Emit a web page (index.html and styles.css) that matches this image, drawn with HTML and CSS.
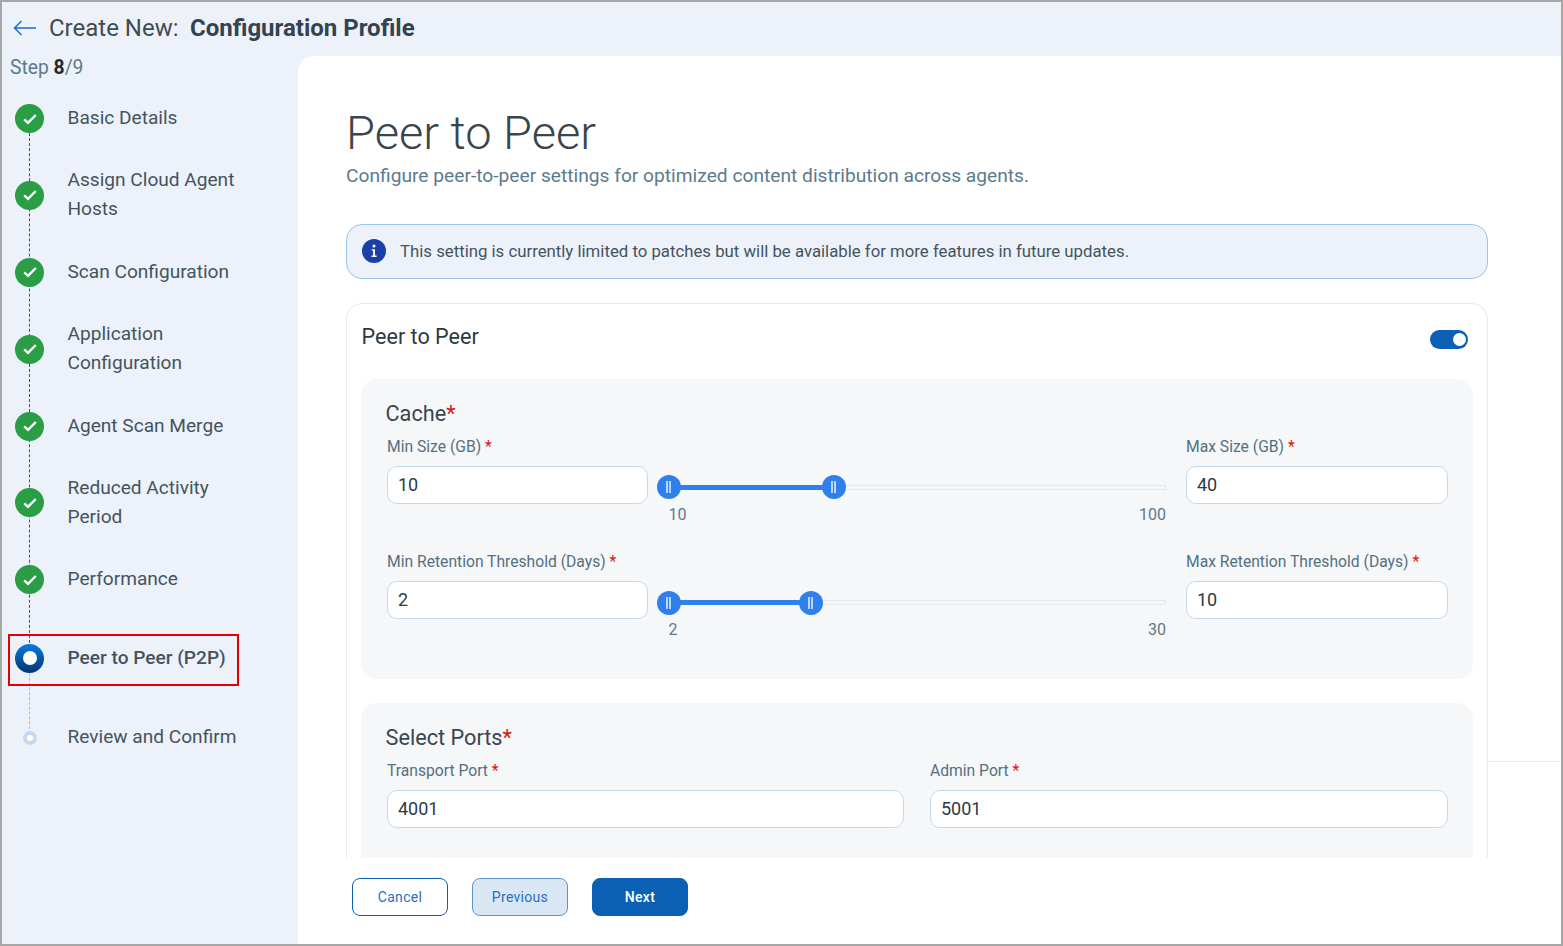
FILE: index.html
```html
<!DOCTYPE html>
<html lang="en">
<head>
    <meta charset="UTF-8">
    <meta name="viewport" content="width=device-width, initial-scale=1.0">
    <title>Create New: Configuration Profile</title>
    <link rel="stylesheet" href="styles.css">
</head>
<body>
    <div class="frame">
        <header class="top-bar">
            <svg class="back-arrow" width="24" height="16" viewBox="0 0 24 16" fill="none" stroke="#1a6fc4" stroke-width="1.5">
                <path d="M23 8H1.5M8.5 1 1.5 8l7 7"/>
            </svg>
            <span class="top-title">Create New:</span>
            <strong class="top-name">Configuration Profile</strong>
        </header>

        <div class="layout">
            <aside class="sidebar">
                <div class="step-count">Step <b>8</b>/9</div>
                <div class="steps">
                    <div class="line line-done"></div>
                    <div class="line line-todo"></div>

                    <div class="step">
                        <span class="dot dot-done"><svg width="18" height="18" viewBox="0 0 18 18" fill="none" stroke="#fff" stroke-width="2.4"><path d="M3.2 9.4 7 12.8 14.8 5"/></svg></span>
                        <span class="step-text">Basic Details</span>
                    </div>
                    <div class="step">
                        <span class="dot dot-done"><svg width="18" height="18" viewBox="0 0 18 18" fill="none" stroke="#fff" stroke-width="2.4"><path d="M3.2 9.4 7 12.8 14.8 5"/></svg></span>
                        <span class="step-text">Assign Cloud Agent Hosts</span>
                    </div>
                    <div class="step">
                        <span class="dot dot-done"><svg width="18" height="18" viewBox="0 0 18 18" fill="none" stroke="#fff" stroke-width="2.4"><path d="M3.2 9.4 7 12.8 14.8 5"/></svg></span>
                        <span class="step-text">Scan Configuration</span>
                    </div>
                    <div class="step">
                        <span class="dot dot-done"><svg width="18" height="18" viewBox="0 0 18 18" fill="none" stroke="#fff" stroke-width="2.4"><path d="M3.2 9.4 7 12.8 14.8 5"/></svg></span>
                        <span class="step-text">Application Configuration</span>
                    </div>
                    <div class="step">
                        <span class="dot dot-done"><svg width="18" height="18" viewBox="0 0 18 18" fill="none" stroke="#fff" stroke-width="2.4"><path d="M3.2 9.4 7 12.8 14.8 5"/></svg></span>
                        <span class="step-text">Agent Scan Merge</span>
                    </div>
                    <div class="step">
                        <span class="dot dot-done"><svg width="18" height="18" viewBox="0 0 18 18" fill="none" stroke="#fff" stroke-width="2.4"><path d="M3.2 9.4 7 12.8 14.8 5"/></svg></span>
                        <span class="step-text">Reduced Activity Period</span>
                    </div>
                    <div class="step">
                        <span class="dot dot-done"><svg width="18" height="18" viewBox="0 0 18 18" fill="none" stroke="#fff" stroke-width="2.4"><path d="M3.2 9.4 7 12.8 14.8 5"/></svg></span>
                        <span class="step-text">Performance</span>
                    </div>
                    <div class="step step-active">
                        <span class="dot dot-active"></span>
                        <span class="step-text">Peer to Peer (P2P)</span>
                    </div>
                    <div class="step step-last">
                        <span class="dot-slot"><span class="dot dot-todo"></span></span>
                        <span class="step-text">Review and Confirm</span>
                    </div>
                </div>
            </aside>

            <main class="main">
                <div class="side-rule"></div>
                <div class="content">
                    <h1 class="page-title">Peer to Peer</h1>
                    <p class="page-sub">Configure peer-to-peer settings for optimized content distribution across agents.</p>

                    <div class="info-box">
                        <svg class="info-icon" width="24" height="24" viewBox="0 0 24 24">
                            <circle cx="12" cy="12" r="12" fill="#1a3fa8"/>
                            <circle cx="12" cy="7" r="1.5" fill="#fff"/>
                            <path d="M9.6 10.2H13V16.6H14.6V18H9.6V16.6H11.1V11.6H9.6Z" fill="#fff"/>
                        </svg>
                        <span>This setting is currently limited to patches but will be available for more features in future updates.</span>
                    </div>

                    <section class="card">
                        <div class="card-head">
                            <h2 class="card-title">Peer to Peer</h2>
                            <span class="toggle"><span class="toggle-knob"></span></span>
                        </div>

                        <div class="panel panel-cache">
                            <h3 class="panel-title">Cache<span class="req">*</span></h3>
                            <div class="range-row">
                                <div class="field">
                                    <label class="field-label">Min Size (GB) <span class="req">*</span></label>
                                    <div class="input">10</div>
                                </div>
                                <div class="slider">
                                    <div class="track">
                                        <div class="fill" style="width: 165px"></div>
                                        <span class="thumb thumb-min"></span>
                                        <span class="thumb" style="left: 165px"></span>
                                    </div>
                                    <div class="scale"><span>10</span><span>100</span></div>
                                </div>
                                <div class="field">
                                    <label class="field-label">Max Size (GB) <span class="req">*</span></label>
                                    <div class="input">40</div>
                                </div>
                            </div>
                            <div class="range-row">
                                <div class="field">
                                    <label class="field-label">Min Retention Threshold (Days) <span class="req">*</span></label>
                                    <div class="input">2</div>
                                </div>
                                <div class="slider">
                                    <div class="track">
                                        <div class="fill" style="width: 142px"></div>
                                        <span class="thumb thumb-min"></span>
                                        <span class="thumb" style="left: 142px"></span>
                                    </div>
                                    <div class="scale"><span>2</span><span>30</span></div>
                                </div>
                                <div class="field">
                                    <label class="field-label">Max Retention Threshold (Days) <span class="req">*</span></label>
                                    <div class="input">10</div>
                                </div>
                            </div>
                        </div>

                        <div class="panel panel-ports">
                            <h3 class="panel-title">Select Ports<span class="req">*</span></h3>
                            <div class="ports-row">
                                <div class="field">
                                    <label class="field-label">Transport Port <span class="req">*</span></label>
                                    <div class="input">4001</div>
                                </div>
                                <div class="field">
                                    <label class="field-label">Admin Port <span class="req">*</span></label>
                                    <div class="input">5001</div>
                                </div>
                            </div>
                        </div>
                    </section>
                </div>

                <footer class="footer">
                    <button class="btn btn-cancel">Cancel</button>
                    <button class="btn btn-prev">Previous</button>
                    <button class="btn btn-next">Next</button>
                </footer>
            </main>
        </div>
    </div>
</body>
</html>
```

FILE: styles.css
```css
* {
    box-sizing: border-box;
}
body {
    margin: 0;
    font-family: 'Roboto', sans-serif;
    background-color: #fff;
}
h1, h2, h3, p {
    margin: 0;
    font-weight: 400;
}
.frame {
    width: 1563px;
    height: 946px;
    border: 2px solid #a6a6a6;
    background-color: #edf2fa;
    display: flex;
    flex-direction: column;
    overflow: hidden;
}

/* top bar */
.top-bar {
    height: 54px;
    flex-shrink: 0;
    display: flex;
    align-items: center;
    padding: 0 0 2px 11px;
}
.back-arrow {
    margin-right: 12px;
}
.top-title {
    font-size: 24px;
    color: #414b52;
    margin-right: 11.5px;
}
.top-name {
    font-size: 24px;
    font-weight: 700;
    color: #33434f;
}

.layout {
    flex: 1;
    display: flex;
    min-height: 0;
}

/* left stepper */
.sidebar {
    width: 296px;
    flex-shrink: 0;
}
.step-count {
    font-size: 19.3px;
    line-height: 24px;
    color: #5c7a8c;
    padding-left: 8px;
    margin-bottom: 23px;
}
.step-count b {
    color: #1f2a33;
    font-weight: 700;
}
.steps {
    position: relative;
    padding-left: 13px;
}
.line {
    position: absolute;
    left: 27px;
    width: 0;
    border-left: 1px dashed #0b5fb5;
}
.line-done {
    top: 20px;
    height: 530px;
}
.line-todo {
    top: 570px;
    height: 56px;
    border-left-color: #9dbfe0;
}
.step {
    position: relative;
    display: flex;
    align-items: center;
    gap: 23.5px;
    margin-bottom: 33.4px;
    font-size: 19.1px;
    line-height: 29px;
    color: #44545f;
}
.step-text {
    width: 190px;
}
.dot {
    width: 29px;
    height: 29px;
    margin: 1px 0 -1px;
    flex-shrink: 0;
    border-radius: 50%;
    display: flex;
    align-items: center;
    justify-content: center;
}
.dot-done {
    background-color: #2a9d45;
}
.dot-active {
    margin: 1px 0 -1px;
    background: linear-gradient(#0a7ae2, #04356f);
}
.dot-active::after {
    content: "";
    width: 14px;
    height: 14px;
    border-radius: 50%;
    background-color: #fff;
}
.dot-slot {
    width: 29px;
    flex-shrink: 0;
    display: flex;
    justify-content: center;
    padding-top: 3px;
}
.dot-todo {
    width: 14px;
    height: 14px;
    margin: 0;
    border: 4px solid #c5daf0;
    background-color: #fff;
}
.step-active {
    font-weight: 500;
    width: 231px;
    height: 52px;
    margin: 40.6px 0 36px -7px;
    padding: 0 0 5px 5px;
    border: 2px solid #e30000;
}
.step-active .step-text {
    white-space: nowrap;
}

/* main panel */
.main {
    position: relative;
    flex: 1;
    min-width: 0;
    display: flex;
    flex-direction: column;
    background-color: #fff;
    border-top-left-radius: 16px;
}
.side-rule {
    position: absolute;
    top: 705px;
    right: 0;
    width: 73px;
    height: 1px;
    background-color: #e8eaed;
}
.content {
    flex: 1;
    min-height: 0;
    overflow: hidden;
    padding: 49px 73px 0 48px;
}
.page-title {
    font-size: 47px;
    line-height: 56px;
    font-weight: 300;
    color: #3a464e;
}
.page-sub {
    margin-top: 1px;
    font-size: 19.2px;
    line-height: 28px;
    color: #5c7a8c;
}
.info-box {
    margin-top: 34px;
    height: 55px;
    display: flex;
    align-items: center;
    gap: 14px;
    padding: 0 0 2px 15px;
    background-color: #edf2fa;
    border: 1px solid #9cc4e8;
    border-radius: 16px;
    font-size: 16.77px;
    color: #44545f;
}
.info-icon {
    flex-shrink: 0;
}
.card {
    margin-top: 24px;
    padding: 0 14px 40px;
    border: 1px solid #e8eaed;
    border-radius: 16px;
}
.card-head {
    height: 75px;
    display: flex;
    justify-content: space-between;
    padding: 19px 5px 0 0.5px;
}
.card-title {
    font-size: 21.6px;
    line-height: 28px;
    color: #2e3a42;
}
.toggle {
    width: 38px;
    height: 19px;
    margin-top: 7px;
    border-radius: 10px;
    background-color: #0b5fb5;
    display: flex;
    align-items: center;
    justify-content: flex-end;
    padding-right: 2px;
}
.toggle-knob {
    width: 13px;
    height: 13px;
    border-radius: 50%;
    background-color: #fff;
}

/* gray panels */
.panel {
    background-color: #f6f7f9;
    border-radius: 16px;
    padding: 21px 25px 41px 26px;
}
.panel-ports {
    margin-top: 24px;
}
.panel-title {
    font-size: 21.7px;
    line-height: 28px;
    color: #3a464e;
    margin-left: -1.5px;
    margin-bottom: 9px;
}
.req {
    color: #e01010;
}
.range-row {
    display: grid;
    grid-template-columns: 261px 509px 262px;
    column-gap: 9px;
    margin-bottom: 29px;
}
.range-row:last-child {
    margin-bottom: 0;
}
.range-row .field:last-child {
    margin-left: 11px;
    width: 262px;
}
.ports-row {
    display: grid;
    grid-template-columns: 517px 518px;
    column-gap: 26px;
}
.field-label {
    display: block;
    font-size: 15.66px;
    line-height: 20px;
    color: #54707f;
    white-space: nowrap;
    margin-bottom: 9px;
}
.input {
    height: 38px;
    padding-left: 10px;
    background-color: #fff;
    border: 1px solid #c5d9ee;
    border-radius: 10px;
    font-size: 18px;
    line-height: 36px;
    color: #2e3a42;
}

/* range slider */
.slider {
    padding-top: 38px;
}
.range-row:last-child .slider {
    padding-top: 39px;
}
.track {
    position: relative;
    height: 24px;
    margin-left: 12px;
}
.track::before {
    content: "";
    position: absolute;
    left: 0;
    right: 0;
    top: 10px;
    height: 3px;
    background-color: #f6f7f9;
    border: 1px solid #e4e8ee;
}
.fill {
    position: absolute;
    left: 0;
    top: 10px;
    height: 5px;
    background-color: #2f80ed;
}
.range-row:last-child .fill,
.range-row:last-child .track::before {
    top: 9px;
}
.thumb {
    position: absolute;
    top: 0;
    width: 24px;
    height: 24px;
    margin-left: -12px;
    border-radius: 50%;
    background-color: #2f80ed;
}
.thumb-min {
    left: 0;
}
.thumb::after {
    content: "";
    position: absolute;
    left: 9px;
    top: 6px;
    width: 1px;
    height: 12px;
    border-left: 2px solid #bcd6f8;
    border-right: 2px solid #bcd6f8;
}
.scale {
    display: flex;
    justify-content: space-between;
    margin: 8px 0 0 11.5px;
    font-size: 16px;
    line-height: 16px;
    color: #5c7a8c;
}
.range-row:last-child .scale {
    margin-top: 7px;
}

/* footer buttons */
.footer {
    height: 86px;
    flex-shrink: 0;
    display: flex;
    align-items: flex-start;
    gap: 24px;
    padding: 20px 0 0 54px;
}
.btn {
    width: 96px;
    height: 38px;
    border-radius: 8px;
    font-family: 'Roboto', sans-serif;
    font-size: 14px;
    letter-spacing: 0.3px;
    cursor: pointer;
}
.btn-cancel {
    background-color: #fff;
    border: 1px solid #0b5fb5;
    color: #2a6fbd;
}
.btn-prev {
    background-color: #d9e6f4;
    border: 1px solid #5b93cf;
    color: #2a6fbd;
}
.btn-next {
    background-color: #0b5fb5;
    border: 1px solid #0b5fb5;
    color: #fff;
    font-weight: 500;
}
```
